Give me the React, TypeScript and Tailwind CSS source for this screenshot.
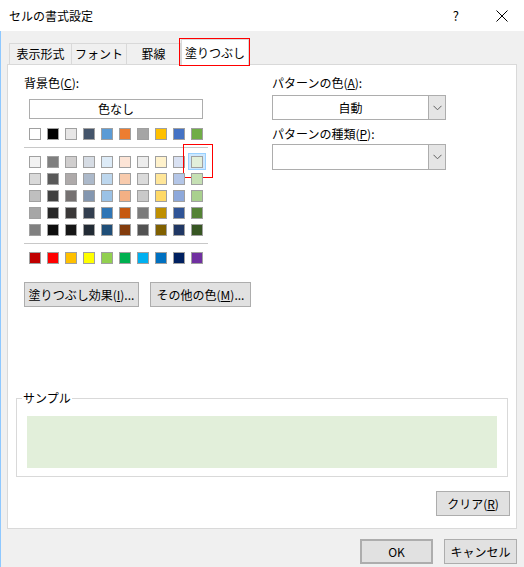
import React from "react";

const font = "font-['Noto_Sans_CJK_JP','Noto_Sans',sans-serif]";

const topRow = [
  "bg-[#ffffff]", "bg-[#000000]", "bg-[#e7e6e6]", "bg-[#44546a]", "bg-[#5b9bd5]",
  "bg-[#ed7d31]", "bg-[#a5a5a5]", "bg-[#ffc000]", "bg-[#4472c4]", "bg-[#70ad47]",
];

const grid = [
  ["bg-[#f2f2f2]", "bg-[#7f7f7f]", "bg-[#d0cece]", "bg-[#d6dce4]", "bg-[#ddebf7]", "bg-[#fce4d6]", "bg-[#ededed]", "bg-[#fff2cc]", "bg-[#d9e1f2]", "bg-[#e2efda]"],
  ["bg-[#d9d9d9]", "bg-[#595959]", "bg-[#aeaaaa]", "bg-[#acb9ca]", "bg-[#bdd7ee]", "bg-[#f8cbad]", "bg-[#dbdbdb]", "bg-[#ffe699]", "bg-[#b4c6e7]", "bg-[#c6e0b4]"],
  ["bg-[#bfbfbf]", "bg-[#404040]", "bg-[#757171]", "bg-[#8497b0]", "bg-[#9bc2e6]", "bg-[#f4b084]", "bg-[#c9c9c9]", "bg-[#ffd966]", "bg-[#8ea9db]", "bg-[#a9d08e]"],
  ["bg-[#a6a6a6]", "bg-[#262626]", "bg-[#3a3838]", "bg-[#333f4f]", "bg-[#2f75b5]", "bg-[#c65911]", "bg-[#7b7b7b]", "bg-[#bf8f00]", "bg-[#305496]", "bg-[#548235]"],
  ["bg-[#808080]", "bg-[#0d0d0d]", "bg-[#161616]", "bg-[#222b35]", "bg-[#1f4e78]", "bg-[#833c0c]", "bg-[#525252]", "bg-[#806000]", "bg-[#203764]", "bg-[#375623]"],
];

const stdRow = [
  "bg-[#c00000]", "bg-[#ff0000]", "bg-[#ffc000]", "bg-[#ffff00]", "bg-[#92d050]",
  "bg-[#00b050]", "bg-[#00b0f0]", "bg-[#0070c0]", "bg-[#002060]", "bg-[#7030a0]",
];

function Swatch({ cls, selected }: { cls: string; selected?: boolean }) {
  return (
    <div className="relative w-[12px] h-[12px]">
      {selected && (
        <>
          <div className="absolute left-[-3px] top-[-3px] w-[18px] h-[17px] border border-[#99d1ff] bg-[#cce8ff]" />
          <div className="absolute left-[-8px] top-[-12px] w-[30px] h-[34px] border border-[#ff0000]" />
        </>
      )}
      <div className={`relative w-[12px] h-[12px] border border-[#a0a0a0] ${cls}`} />
    </div>
  );
}

function Row({ items, sel }: { items: string[]; sel?: number }) {
  return (
    <div className="flex gap-[6px] pl-[5px]">
      {items.map((c, i) => (
        <Swatch key={i} cls={c} selected={sel === i} />
      ))}
    </div>
  );
}

function Chevron() {
  return (
    <svg width="9" height="6" viewBox="0 0 9 6">
      <path d="M0.5 0.8 L4.5 4.8 L8.5 0.8" fill="none" stroke="#606060" strokeWidth="1" />
    </svg>
  );
}

function Dropdown({ text, h }: { text?: string; h: string }) {
  return (
    <div className={`flex w-[174px] ${h} border border-[#adadad] bg-white`}>
      <div className="flex-1 flex items-center justify-center text-[12px] text-black">{text}</div>
      <div className="w-[17px] border-l border-[#adadad] bg-[#e5e5e5] flex items-center justify-center">
        <Chevron />
      </div>
    </div>
  );
}

function Btn({ children, w, cls = "" }: { children: React.ReactNode; w: string; cls?: string }) {
  return (
    <div className={`${w} h-[25px] border border-[#adadad] bg-[#e1e1e1] flex items-center justify-center text-[12px] text-black ${cls}`}>
      {children}
    </div>
  );
}

export default function App() {
  return (
    <div className={`w-[524px] h-[567px] bg-[#f0f0f0] flex flex-col overflow-hidden ${font} text-black`}>
      {/* title bar */}
      <div className="h-[31px] bg-white flex items-center pl-[9px] shrink-0">
        <span className="text-[12px] leading-none">セルの書式設定</span>
        <div className="flex-1" />
        <span className="text-[13px] leading-none mr-[37px]">?</span>
        <svg width="12" height="12" viewBox="0 0 12 12" className="mr-[16px]">
          <path d="M0.5 0.5 L11.5 11.5 M11.5 0.5 L0.5 11.5" stroke="#000" strokeWidth="1" />
        </svg>
      </div>

      <div className="flex-1 flex flex-col border-l border-[#8ec8ff] pl-[6px] pr-[7px]">
        {/* tabs */}
        <div className="flex items-end h-[33px] pl-[2px]">
          <div className="w-[63px] h-[21px] border border-b-0 border-[#d9d9d9] flex items-center justify-center text-[12px]">表示形式</div>
          <div className="w-[55px] h-[21px] border border-b-0 border-l-0 border-[#d9d9d9] flex items-center justify-center text-[12px]">フォント</div>
          <div className="w-[54px] h-[21px] border border-b-0 border-l-0 border-[#d9d9d9] flex items-center justify-center text-[12px]">罫線</div>
          <div className="relative w-[68px] h-[26px] border border-b-0 border-[#d9d9d9] bg-white flex items-center justify-center text-[12px] mb-[-1px] z-10">
            塗りつぶし
            <div className="absolute left-[-3px] top-[-2px] w-[71px] h-[28px] border border-[#ff0000]" />
          </div>
        </div>

        {/* panel */}
        <div className="w-[510px] h-[465px] border border-[#d9d9d9] bg-white flex flex-col">
          <div className="flex pt-[10px] pl-[16px]">
            {/* left column */}
            <div className="w-[184px] flex flex-col">
              <div className="text-[12px] leading-[16px] h-[16px]">
                背景色(<span className="underline">C</span>):
              </div>
              <div className="ml-[5px] mt-[8px] w-[174px] h-[20px] border border-[#adadad] flex items-center justify-center text-[12px]">
                色なし
              </div>
              <div className="mt-[9px]">
                <Row items={topRow} />
              </div>
              <div className="mt-[7px] h-[1px] bg-[#c8c8c8]" />
              <div className="mt-[8px] flex flex-col gap-[5px]">
                {grid.map((r, i) => (
                  <Row key={i} items={r} sel={i === 0 ? 9 : undefined} />
                ))}
              </div>
              <div className="mt-[7px] h-[1px] bg-[#c8c8c8]" />
              <div className="mt-[8px]">
                <Row items={stdRow} />
              </div>
              <div className="mt-[18px] flex gap-[11px]">
                <Btn w="w-[115px] shrink-0">
                  塗りつぶし効果(<span className="underline">I</span>)...
                </Btn>
                <Btn w="w-[101px] shrink-0">
                  その他の色(<span className="underline">M</span>)...
                </Btn>
              </div>
            </div>

            {/* right column */}
            <div className="ml-[64px] flex flex-col">
              <div className="text-[12px] leading-[16px] h-[16px]">
                パターンの色(<span className="underline">A</span>):
              </div>
              <div className="mt-[4px]">
                <Dropdown text="自動" h="h-[25px]" />
              </div>
              <div className="mt-[6px] text-[12px] leading-[16px] h-[16px]">
                パターンの種類(<span className="underline">P</span>):
              </div>
              <div className="mt-[2px]">
                <Dropdown h="h-[26px]" />
              </div>
            </div>
          </div>

          {/* sample group */}
          <div className="relative mt-[91px] mx-[8px] h-[79px] border border-[#d9d9d9] px-[10px] pt-[17px] pb-[8px]">
            <span className="absolute left-[5px] top-[-9px] bg-white px-[1px] text-[12px] leading-[16px]">サンプル</span>
            <div className="h-[52px] bg-[#e2efda]" />
          </div>

          <div className="flex justify-end pr-[6px] mt-[14px]">
            <Btn w="w-[74px]">
              クリア(<span className="underline">R</span>)
            </Btn>
          </div>
        </div>

        {/* bottom buttons */}
        <div className="flex justify-end gap-[11px] mt-[10px]">
          <Btn w="w-[73px]" cls="border-2 border-[#0078d7]">OK</Btn>
          <Btn w="w-[73px]">キャンセル</Btn>
        </div>
      </div>
    </div>
  );
}
